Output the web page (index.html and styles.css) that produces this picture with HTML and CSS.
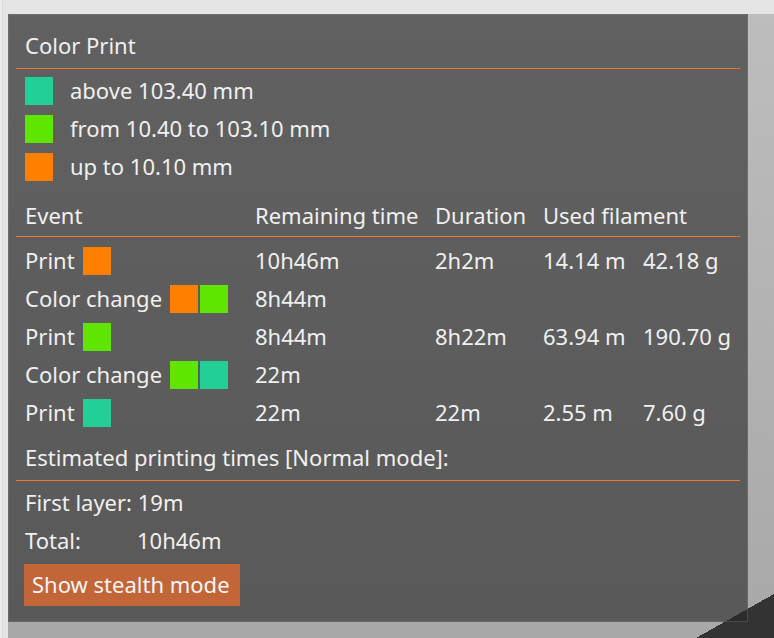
FILE: index.html
```html
<!DOCTYPE html>
<html lang="en">
  <head>
    <meta charset="UTF-8" />
    <title>Color Print</title>
    <meta name="viewport" content="width=device-width, initial-scale=1.0" />
    <link rel="stylesheet" href="styles.css">
  </head>
  <body>
    <div class="viewport">
      <svg class="corner" width="78" height="44" viewBox="0 0 78 44">
        <polygon points="0,44 78,0 78,44" fill="#333333" />
      </svg>

      <div class="panel">
        <div class="row title">Color Print</div>
        <div class="sep"></div>

        <div class="legend">
          <div class="row">
            <span class="swatch teal"></span>
            <span>above 103.40 mm</span>
          </div>
          <div class="row">
            <span class="swatch green"></span>
            <span>from 10.40 to 103.10 mm</span>
          </div>
          <div class="row">
            <span class="swatch orange"></span>
            <span>up to 10.10 mm</span>
          </div>
        </div>

        <div class="table head">
          <span>Event</span>
          <span>Remaining time</span>
          <span>Duration</span>
          <span class="wide">Used filament</span>
        </div>
        <div class="sep"></div>

        <div class="events">
          <div class="table">
            <div class="event"><span>Print</span><i class="swatch orange"></i></div>
            <span>10h46m</span>
            <span>2h2m</span>
            <span>14.14 m</span>
            <span>42.18 g</span>
          </div>
          <div class="table">
            <div class="event"><span>Color change</span><i class="swatch orange"></i><i class="swatch green"></i></div>
            <span>8h44m</span>
          </div>
          <div class="table">
            <div class="event"><span>Print</span><i class="swatch green"></i></div>
            <span>8h44m</span>
            <span>8h22m</span>
            <span>63.94 m</span>
            <span>190.70 g</span>
          </div>
          <div class="table">
            <div class="event"><span>Color change</span><i class="swatch green"></i><i class="swatch teal"></i></div>
            <span>22m</span>
          </div>
          <div class="table">
            <div class="event"><span>Print</span><i class="swatch teal"></i></div>
            <span>22m</span>
            <span>22m</span>
            <span>2.55 m</span>
            <span>7.60 g</span>
          </div>
        </div>

        <div class="row estimate">Estimated printing times [Normal mode]:</div>
        <div class="sep"></div>

        <div class="times">
          <div class="row">First layer: 19m</div>
          <div class="row"><span class="label">Total:</span><span>10h46m</span></div>
        </div>

        <button type="button" class="stealth">Show stealth mode</button>
      </div>
    </div>
  </body>
</html>
```

FILE: styles.css
```css
* {
  box-sizing: border-box;
}

body {
  margin: 0;
  padding: 14px 0 0 8px;
  height: 638px;
  overflow: hidden;
  font-family: "Noto Sans", sans-serif;
  font-size: 22px;
  color: #f0f0f0;
  background: linear-gradient(to right, #ececec 0 2px, #d8d8d8 2px 3px, #e5e5e5 3px);
}

.viewport {
  position: relative;
  height: 624px;
  background: linear-gradient(#bdbdbd, #a8a8a8);
  overflow: hidden;
}

.corner {
  position: absolute;
  right: 0;
  bottom: 0;
  shape-rendering: crispEdges;
}

.panel {
  position: relative;
  width: 740px;
  height: 608px;
  padding: 18px 8px 0;
  background: rgba(41, 41, 41, 0.62);
  box-shadow: inset 0 0 0 1px rgba(140, 140, 140, 0.3);
}

.row {
  display: flex;
  align-items: center;
  height: 28px;
  padding: 0 0 2px 9px;
  white-space: nowrap;
}

.title {
  padding-bottom: 3px;
}

.sep {
  height: 0;
  margin: 8px 0;
  border-top: 1px solid #f47430;
}

.legend {
  display: flex;
  flex-direction: column;
  gap: 10px;
}

.legend .swatch {
  margin: 2px 17px 0 0;
}

.swatch {
  display: inline-block;
  width: 28px;
  height: 28px;
  flex: none;
}

.teal {
  background: #22cf96;
}

.green {
  background: #5ee600;
}

.orange {
  background: #ff8000;
}

.table {
  display: grid;
  grid-template-columns: 230px 180px 108px 100px auto;
  align-items: center;
  height: 28px;
  padding-left: 9px;
  white-space: nowrap;
}

.table > span,
.event > span {
  padding-bottom: 2px;
}

.table.head > span {
  padding-bottom: 4px;
}

.table.head {
  margin-top: 19px;
}

.table .wide {
  grid-column: span 2;
}

.events {
  display: flex;
  flex-direction: column;
  gap: 10px;
}

.event {
  display: flex;
  align-items: center;
}

.event .swatch:first-of-type {
  margin-left: 8px;
}

.event .swatch + .swatch {
  margin-left: 2px;
}

.estimate {
  margin-top: 19px;
}

.times {
  display: flex;
  flex-direction: column;
  gap: 10px;
}

.times .label {
  width: 112px;
}

.stealth {
  display: block;
  margin: 9px 0 0 8px;
  height: 42px;
  padding: 0 10px 2px 8px;
  border: none;
  background: #c26537;
  color: #f4f4f4;
  font-family: inherit;
  font-size: 22px;
}
```
